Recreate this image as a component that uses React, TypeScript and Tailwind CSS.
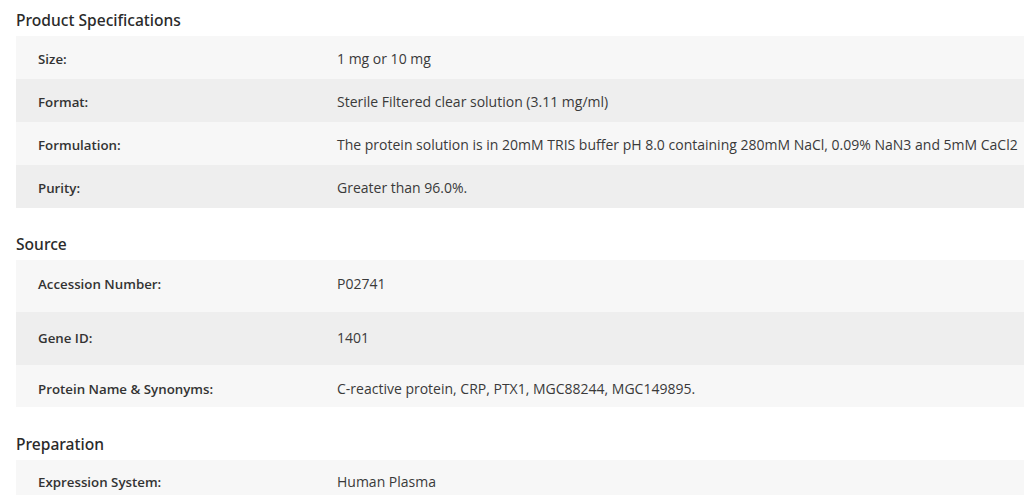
import React from "react";

type Row = { label: string; value: string; cls: string };

const sections: { title: string; mt: string; rows: Row[] }[] = [
  {
    title: "Product Specifications",
    mt: "",
    rows: [
      { label: "Size:", value: "1 mg or 10 mg", cls: "h-[43px] pt-[13px] bg-[#f7f7f7]" },
      {
        label: "Format:",
        value: "Sterile Filtered clear solution (3.11 mg/ml)",
        cls: "h-[43px] pt-[13px] bg-[#eeeeee]",
      },
      {
        label: "Formulation:",
        value:
          "The protein solution is in 20mM TRIS buffer pH 8.0 containing 280mM NaCl, 0.09% NaN3 and 5mM CaCl2",
        cls: "h-[43px] pt-[13px] bg-[#f7f7f7]",
      },
      { label: "Purity:", value: "Greater than 96.0%.", cls: "h-[43px] pt-[13px] bg-[#eeeeee]" },
    ],
  },
  {
    title: "Source",
    mt: "mt-6",
    rows: [
      { label: "Accession Number:", value: "P02741", cls: "h-[52px] pt-[14px] bg-[#f7f7f7]" },
      { label: "Gene ID:", value: "1401", cls: "h-[53px] pt-[16px] bg-[#eeeeee]" },
      {
        label: "Protein Name & Synonyms:",
        value: "C-reactive protein, CRP, PTX1, MGC88244, MGC149895.",
        cls: "h-[42px] pt-[14px] bg-[#f7f7f7]",
      },
    ],
  },
  {
    title: "Preparation",
    mt: "mt-[25px]",
    rows: [{ label: "Expression System:", value: "Human Plasma", cls: "h-[43px] pt-[12px] bg-[#f7f7f7]" }],
  },
];

export default function App() {
  return (
    <div
      className="w-[1024px] h-[495px] overflow-hidden bg-white pl-4 pt-2 text-[#333333]"
      style={{ fontFamily: '"Open Sans", "Noto Sans", sans-serif' }}
    >
      {sections.map((s) => (
        <div key={s.title} className={s.mt}>
          <h2
            className="text-[15.6px] leading-6 font-medium text-[#2a2a2a] mb-1"
            style={{ fontFamily: '"Noto Sans", "Open Sans", sans-serif' }}
          >
            {s.title}
          </h2>
          <div className="flex flex-col">
            {s.rows.map((r) => (
              <div key={r.label} className={`flex items-start ${r.cls}`}>
                <div className="w-[321px] shrink-0 pl-[22px] text-[13.3px] leading-5 font-semibold text-[#333333]">
                  {r.label}
                </div>
                <div className="whitespace-nowrap text-[14px] leading-5 text-[#3a3a3a]">{r.value}</div>
              </div>
            ))}
          </div>
        </div>
      ))}
    </div>
  );
}
